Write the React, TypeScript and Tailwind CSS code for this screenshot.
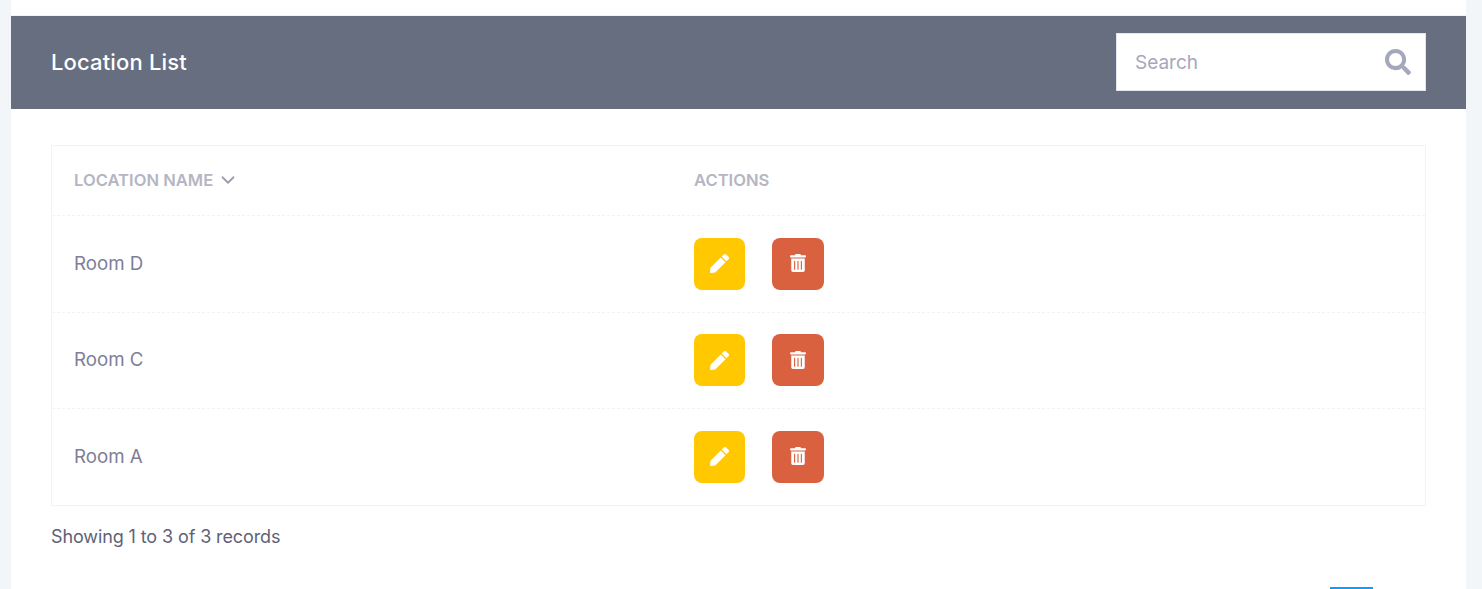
import { FaPen, FaSearch, FaTrashAlt } from "react-icons/fa"
import { FiChevronDown } from "react-icons/fi"

function RoomRow({ name, h, nudge = "" }: { name: string; h: string; nudge?: string }) {
  return (
    <div className={`flex items-center pb-[1px] border-t border-dashed border-[#f1f3f6] ${h}`}>
      <div className={`w-[642px] pl-[22px] text-[18.7px] leading-[27px] text-[#7e7e96] ${nudge}`}>{name}</div>
      <div className="flex gap-[27px]">
        <button className="w-[51px] h-[52px] bg-[#ffc800] rounded-lg flex items-center justify-center text-white">
          <FaPen className="w-[19px] h-[19px]" />
        </button>
        <button className="w-[52px] h-[52px] bg-[#d96140] rounded-lg flex items-center justify-center text-white">
          <FaTrashAlt className="w-[16px] h-[18px] mb-[1px]" />
        </button>
      </div>
    </div>
  )
}

export default function App() {
  return (
    <main className="h-[589px] overflow-hidden bg-[#f3f6f9] pl-[11px] pr-[16px] font-['Inter',sans-serif]">
      <div className="h-full bg-white">
        <div className="h-[16px] border-b border-[#f1f3f6]" />
        <div className="h-[93px] bg-[#666e80] pl-[40px] pr-[40px] pb-[1px] flex items-center justify-between">
          <h1 className="text-[22px] font-medium tracking-[0.15px] text-white">Location List</h1>
          <div className="w-[310px] h-[58px] bg-white border border-[#e4e6ef] flex items-center justify-between pl-[18px] pr-[14px]">
            <span className="text-[19px] pt-[2px] text-[#a5a7bd]">Search</span>
            <FaSearch className="w-[26px] h-[26px] text-[#a5a7bd]" />
          </div>
        </div>
        <div className="pt-[36px] pl-[40px] pr-[40px]">
          <div className="border border-[#f1f3f6]">
            <div className="h-[69px] pb-[1px] flex items-center">
              <div className="w-[642px] pl-[22px] flex items-center gap-[4px] text-[16.6px] font-semibold text-[#b5b5c3]">
                LOCATION NAME
                <FiChevronDown className="w-[22px] h-[22px] text-[#9d9db1]" />
              </div>
              <div className="text-[16.6px] font-semibold text-[#b5b5c3]">ACTIONS</div>
            </div>
            <RoomRow name="Room D" h="h-[97px]" />
            <RoomRow name="Room C" h="h-[96px]" nudge="mb-[1px]" />
            <RoomRow name="Room A" h="h-[97px]" />
          </div>
          <p className="mt-[17px] text-[18px] tracking-[-0.11px] text-[#5e6278]">Showing 1 to 3 of 3 records</p>
          <div className="mt-[37px] flex justify-end pr-[53px]">
            <div className="w-[43px] h-[2px] bg-[#00a3ff]" />
          </div>
        </div>
      </div>
    </main>
  )
}
